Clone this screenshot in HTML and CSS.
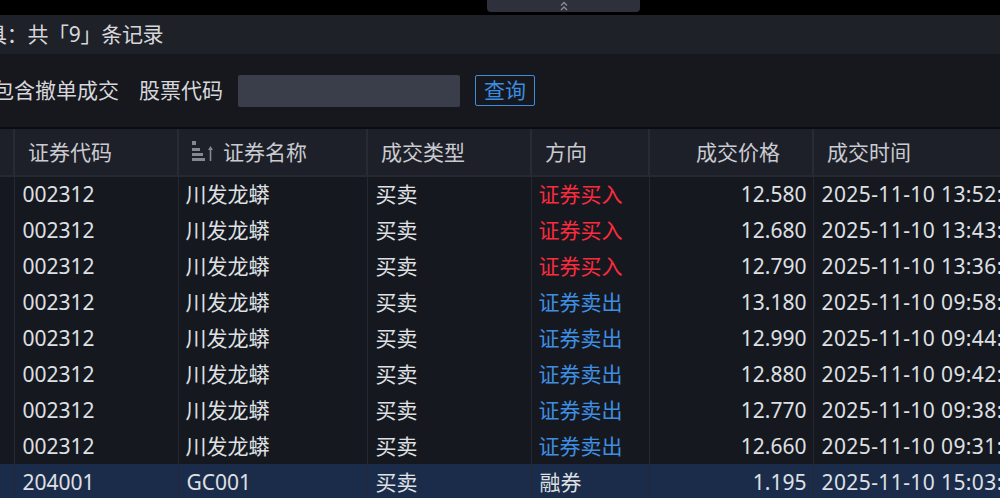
FILE: index.html
```html
<!DOCTYPE html>
<html lang="zh-CN">
<head>
<meta charset="utf-8">
<title>成交查询</title>
<link rel="stylesheet" href="styles.css">
</head>
<body>
<div class="page">
  <div class="topbar">
    <div class="tab">
      <svg class="chev" width="10" height="10" viewBox="0 0 10 10"><path d="M2 4.5 L5 1.5 L8 4.5 M2 9 L5 6 L8 9" fill="none" stroke="#8a8d96" stroke-width="1.4"/></svg>
    </div>
  </div>
  <div class="titlebar"><span class="title">具：共「9」条记录</span></div>
  <div class="filter">
    <span class="lbl first">包含撤单成交</span>
    <span class="lbl code">股票代码</span>
    <div class="input"></div>
    <button class="btn">查询</button>
  </div>
  <div class="gridwrap">
    <table class="grid">
      <colgroup>
        <col class="c0"><col class="c1"><col class="c2"><col class="c3"><col class="c4"><col class="c5"><col class="c6">
      </colgroup>
      <thead>
        <tr>
          <th></th>
          <th>证券代码</th>
          <th><span class="sorti"><svg width="22" height="22" viewBox="0 0 22 22"><g fill="#85888f"><rect x="0" y="0" width="4" height="4"/><rect x="0" y="7" width="8" height="3"/><rect x="0" y="12" width="11" height="3"/><rect x="0" y="17" width="13" height="3"/><path d="M16 9 L18.5 5 L21 9 Z"/><rect x="17.7" y="8" width="1.6" height="12"/></g></svg></span>证券名称</th>
          <th>成交类型</th>
          <th>方向</th>
          <th class="r">成交价格</th>
          <th>成交时间</th>
        </tr>
      </thead>
      <tbody>
        <tr><td></td><td>002312</td><td class="cj">川发龙蟒</td><td>买卖</td><td class="buy">证券买入</td><td class="r">12.580</td><td class="t">2025-11-10 13:52:16</td></tr>
        <tr><td></td><td>002312</td><td class="cj">川发龙蟒</td><td>买卖</td><td class="buy">证券买入</td><td class="r">12.680</td><td class="t">2025-11-10 13:43:08</td></tr>
        <tr><td></td><td>002312</td><td class="cj">川发龙蟒</td><td>买卖</td><td class="buy">证券买入</td><td class="r">12.790</td><td class="t">2025-11-10 13:36:41</td></tr>
        <tr><td></td><td>002312</td><td class="cj">川发龙蟒</td><td>买卖</td><td class="sell">证券卖出</td><td class="r">13.180</td><td class="t">2025-11-10 09:58:22</td></tr>
        <tr><td></td><td>002312</td><td class="cj">川发龙蟒</td><td>买卖</td><td class="sell">证券卖出</td><td class="r">12.990</td><td class="t">2025-11-10 09:44:37</td></tr>
        <tr><td></td><td>002312</td><td class="cj">川发龙蟒</td><td>买卖</td><td class="sell">证券卖出</td><td class="r">12.880</td><td class="t">2025-11-10 09:42:05</td></tr>
        <tr><td></td><td>002312</td><td class="cj">川发龙蟒</td><td>买卖</td><td class="sell">证券卖出</td><td class="r">12.770</td><td class="t">2025-11-10 09:38:51</td></tr>
        <tr><td></td><td>002312</td><td class="cj">川发龙蟒</td><td>买卖</td><td class="sell">证券卖出</td><td class="r">12.660</td><td class="t">2025-11-10 09:31:19</td></tr>
        <tr class="sel"><td></td><td>204001</td><td>GC001</td><td>买卖</td><td>融券</td><td class="r">1.195</td><td class="t">2025-11-10 15:03:00</td></tr>
      </tbody>
    </table>
  </div>
</div>
</body>
</html>
```

FILE: styles.css
```css
* { box-sizing: border-box; }
html, body { margin: 0; padding: 0; background: #16181f; }
body {
  font-family: "Noto Sans", "Noto Sans CJK SC", sans-serif;
  font-size: 21px;
  color: #dcdde0;
  width: 1000px;
  height: 498px;
  overflow: hidden;
}
.page { width: 1000px; overflow: hidden; }

.topbar {
  height: 15px;
  background: #000;
  display: flex;
  justify-content: flex-start;
  padding-left: 487px;
}
.tab {
  width: 153px;
  height: 12px;
  background: #2e303b;
  border-radius: 0 0 4px 4px;
  display: flex;
  justify-content: center;
  align-items: center;
}
.chev { display: block; }

.titlebar {
  height: 39px;
  background: #1f2129;
  display: flex;
  align-items: center;
  overflow: hidden;
}
.title {
  margin-left: -14px;
  white-space: nowrap;
  color: #d6d7da;
  line-height: 1;
  letter-spacing: -0.3px;
}

.filter {
  height: 75px;
  background: #16181e;
  display: flex;
  align-items: center;
  border-bottom: 2px solid #0b0c10;
}
.lbl { color: #d6d7da; white-space: nowrap; line-height: 1; }
.lbl.first { margin-left: -7px; }
.lbl.code { margin-left: 20px; }
.input {
  margin-left: 15px;
  width: 222px;
  height: 32px;
  background: #3a3e4b;
  border-radius: 2px;
}
.btn {
  margin-left: 15px;
  width: 60px;
  height: 31px;
  background: transparent;
  border: 1px solid #3b8de0;
  border-radius: 2px;
  color: #3b8de0;
  font: inherit;
  font-size: 21px;
  line-height: 1;
  padding: 0;
}

.gridwrap { width: 1000px; overflow: hidden; }
.grid {
  table-layout: fixed;
  border-collapse: collapse;
  width: 1200px;
}
.c0 { width: 14px; }
.c1 { width: 164px; }
.c2 { width: 189px; }
.c3 { width: 164px; }
.c4 { width: 118px; }
.c5 { width: 164px; }
.c6 { width: 387px; }

.grid th {
  height: 47px;
  background: #1e2029;
  color: #c9cbd0;
  font-weight: normal;
  text-align: left;
  padding: 0 0 0 13px;
  border-right: 2px solid #282b34;
  border-bottom: 2px solid #262932;
  white-space: nowrap;
  line-height: 1;
}
.grid th:first-child { padding: 0; }
.grid th.r { text-align: right; padding: 0 32px 0 0; }
.sorti { display: inline-block; vertical-align: -3px; margin-right: 9px; }
.sorti svg { display: block; }

.grid td {
  height: 36px;
  padding: 0 0 0 8px;
  border-right: 1px solid #252830;
  white-space: nowrap;
  overflow: hidden;
  line-height: 1;
  color: #dfe0e3;
}
.grid td:first-child { padding: 0; }
.grid td.cj { padding-left: 7px; }
.grid td.r { text-align: right; padding: 0 6px 0 0; }
.grid td.t { letter-spacing: 0.4px; }
.grid td.buy { color: #fb2b3d; padding-left: 7px; }
.grid td.sell { color: #3e8fe2; padding-left: 7px; }
.grid tr.sel td { background: #1b2c4a; }
```
